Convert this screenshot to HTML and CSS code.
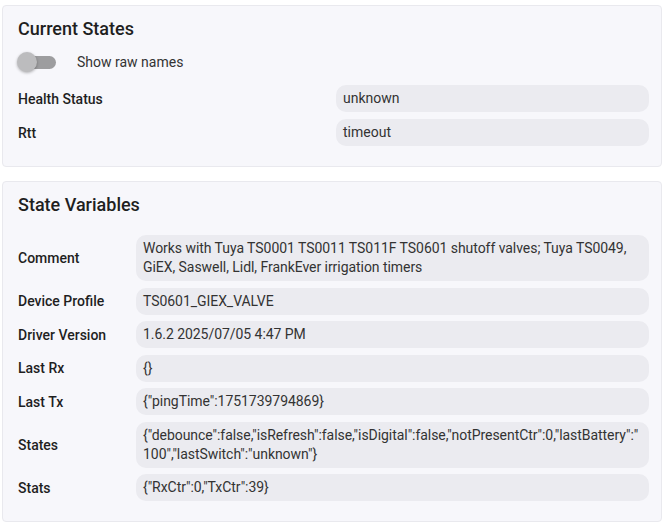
FILE: index.html
```
<!doctype html>
<html>
<head>
  <meta charset="utf-8">
  <meta name="viewport" content="width=device-width, initial-scale=1">
  <title>Device States</title>
  <link rel="stylesheet" href="styles.css">
</head>
<body>

  <div class="card">
    <h2>Current States</h2>
    <div class="toggle-row">
      <span class="toggle"><span class="thumb"></span></span>
      <span class="toggle-label">Show raw names</span>
    </div>
    <div class="grid half">
      <div class="label">Health Status</div>
      <div class="value">unknown</div>
      <div class="label">Rtt</div>
      <div class="value">timeout</div>
    </div>
  </div>

  <div class="card">
    <h2>State Variables</h2>
    <div class="grid vars">
      <div class="label">Comment</div>
      <div class="value">Works with Tuya TS0001 TS0011 TS011F TS0601 shutoff valves; Tuya TS0049, GiEX, Saswell, Lidl, FrankEver irrigation timers</div>
      <div class="label">Device Profile</div>
      <div class="value">TS0601_GIEX_VALVE</div>
      <div class="label">Driver Version</div>
      <div class="value">1.6.2 2025/07/05 4:47 PM</div>
      <div class="label">Last Rx</div>
      <div class="value">{}</div>
      <div class="label">Last Tx</div>
      <div class="value">{"pingTime":1751739794869}</div>
      <div class="label">States</div>
      <div class="value">{"debounce":false,"isRefresh":false,"isDigital":false,"notPresentCtr":0,"lastBattery":"<wbr>100","lastSwitch":"unknown"}</div>
      <div class="label">Stats</div>
      <div class="value">{"RxCtr":0,"TxCtr":39}</div>
    </div>
  </div>

</body>
</html>
```

FILE: styles.css
```
body {
  margin: 0;
  padding: 5px 1px 0 2px;
  background: #fff;
  font-family: Roboto, "Liberation Sans", sans-serif;
  font-size: 14px;
  color: #333;
}

.card {
  background: #f7f7fb;
  border: 1px solid #e9e9ee;
  border-radius: 4px;
  padding: 10px 12px 20px 15px;
  margin-bottom: 14px;
}

.card h2 {
  margin: 0;
  font-size: 18px;
  font-weight: 500;
  line-height: 26px;
  color: #1f1f1f;
}

.toggle-row {
  display: flex;
  align-items: center;
  height: 24px;
  margin-top: 8px;
}

.toggle {
  position: relative;
  width: 36px;
  height: 13px;
  margin-left: 2px;
  border-radius: 7px;
  background: #9d9d9f;
}

.toggle .thumb {
  position: absolute;
  left: -3px;
  top: -4px;
  width: 20px;
  height: 20px;
  border-radius: 50%;
  background: #bcbcbe;
  box-shadow: 0 1px 3px rgba(0, 0, 0, 0.3);
}

.toggle-label {
  margin-left: 21px;
  color: #333;
}

.grid {
  display: grid;
  row-gap: 7px;
  align-items: center;
}

.half {
  grid-template-columns: minmax(0, 1fr) minmax(0, 1fr);
  column-gap: 5px;
  margin-top: 11px;
}

.vars {
  grid-template-columns: 118px minmax(0, 1fr);
  row-gap: 6.5px;
  margin-top: 17px;
}

.label {
  font-weight: 500;
  color: #1f1f1f;
}

.value {
  background: #ebebf0;
  border-radius: 10px;
  padding: 4px 7px;
  line-height: 19px;
  color: #333;
  overflow-wrap: anywhere;
}

.vars .value {
  letter-spacing: -0.05px;
}
```
